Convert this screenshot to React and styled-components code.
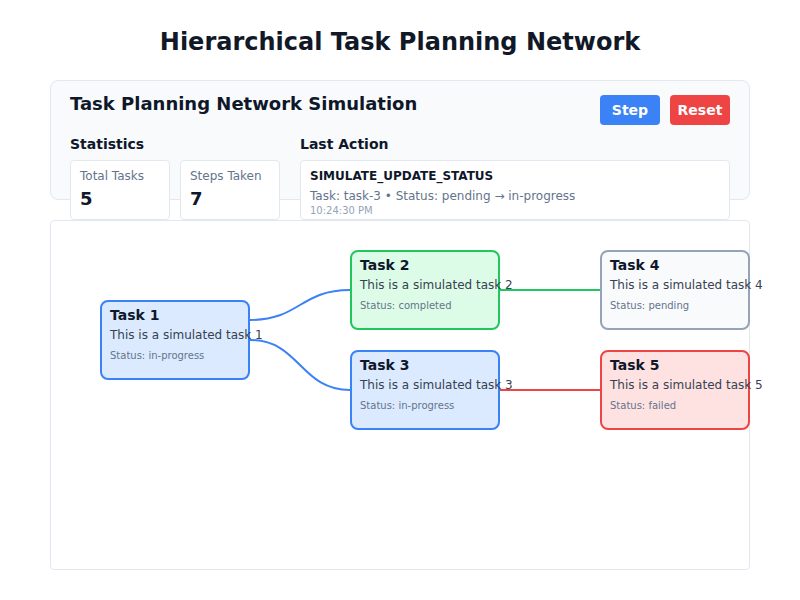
import React from "react";
import styled, { createGlobalStyle } from "styled-components";

const Global = createGlobalStyle`
  html, body { margin: 0; padding: 0; background: #ffffff; }
  body { font-family: "DejaVu Sans", "Liberation Sans", sans-serif; color: #0f172a; }
  * { box-sizing: border-box; }
`;

const Page = styled.div`
  padding: 20px 50px;
  width: 800px;
`;

const Title = styled.h1`
  margin: 8px 0 24px;
  font-size: 24px;
  line-height: 28px;
  font-weight: 700;
  text-align: center;
  color: #111827;
`;

const Panel = styled.section`
  height: 120px;
  padding: 14px 19px;
  background: #f8fafc;
  border: 1px solid #e2e8f0;
  border-radius: 8px;
  margin-bottom: 20px;
`;

const Header = styled.div`
  display: flex;
  justify-content: space-between;
  align-items: flex-start;
`;

const PanelTitle = styled.h2`
  margin: 0;
  font-size: 18px;
  line-height: 18px;
  font-weight: 700;
  color: #0f172a;
`;

const Buttons = styled.div`
  display: flex;
  gap: 10px;
`;

const Button = styled.button`
  width: 60px;
  height: 30px;
  border: none;
  border-radius: 4px;
  padding: 0;
  font-family: inherit;
  font-size: 14px;
  font-weight: 700;
  color: #ffffff;
  background: ${(p) => (p.$variant === "danger" ? "#ef4444" : "#3b82f6")};
  cursor: pointer;
`;

const Sections = styled.div`
  margin-top: 11px;
  display: flex;
  gap: 20px;
`;

const Section = styled.div`
  display: flex;
  flex-direction: column;
  flex: ${(p) => (p.$grow ? 1 : "none")};
`;

const SectionTitle = styled.h3`
  margin: 0 0 7px;
  font-size: 14px;
  line-height: 17px;
  font-weight: 700;
  color: #0f172a;
`;

const StatRow = styled.div`
  display: flex;
  gap: 10px;
`;

const Card = styled.div`
  height: 60px;
  width: ${(p) => (p.$wide ? "auto" : "100px")};
  padding: 8px 9px;
  background: #ffffff;
  border: 1px solid #e2e8f0;
  border-radius: 4px;
`;

const StatLabel = styled.div`
  font-size: 12px;
  line-height: 14px;
  color: #64748b;
`;

const StatValue = styled.div`
  margin-top: 5px;
  font-size: 18px;
  line-height: 21px;
  font-weight: 700;
  color: #0f172a;
`;

const ActionType = styled.div`
  font-size: 12px;
  line-height: 14px;
  font-weight: 700;
  color: #0f172a;
  margin-bottom: 6px;
`;

const ActionDetail = styled.div`
  font-size: 12px;
  line-height: 14px;
  color: #64748b;
  margin-bottom: 2px;
`;

const ActionTime = styled.div`
  font-size: 10px;
  line-height: 12px;
  color: #94a3b8;
`;

const Canvas = styled.div`
  position: relative;
  height: 350px;
  background: #ffffff;
  border: 1px solid #e2e8f0;
  border-radius: 4px;
`;

const Layer = styled.div`
  position: absolute;
  inset: -1px;
`;

const Edges = styled.svg`
  position: absolute;
  left: 0;
  top: 0;
  overflow: visible;
`;

const statusStyles = {
  "in-progress": { bg: "#dbeafe", border: "#3b82f6" },
  completed: { bg: "#dcfce7", border: "#22c55e" },
  pending: { bg: "#f8fafc", border: "#94a3b8" },
  failed: { bg: "#fee2e2", border: "#ef4444" },
};

const Node = styled.div`
  position: absolute;
  width: 150px;
  height: 80px;
  padding: 5px 8px;
  border: 2px solid ${(p) => statusStyles[p.$status].border};
  background: ${(p) => statusStyles[p.$status].bg};
  border-radius: 8px;
  white-space: nowrap;
`;

const NodeTitle = styled.div`
  font-size: 14px;
  line-height: 16px;
  font-weight: 700;
  color: #0f172a;
  margin-bottom: 5px;
`;

const NodeDesc = styled.div`
  font-size: 12px;
  line-height: 14px;
  color: #374151;
  margin-bottom: 8px;
`;

const NodeStatus = styled.div`
  font-size: 10px;
  line-height: 12px;
  color: #64748b;
`;

const tasks = [
  { id: 1, status: "in-progress", x: 50, y: 80 },
  { id: 2, status: "completed", x: 300, y: 30 },
  { id: 3, status: "in-progress", x: 300, y: 130 },
  { id: 4, status: "pending", x: 550, y: 30 },
  { id: 5, status: "failed", x: 550, y: 130 },
];

const edges = [
  { d: "M200 100 C250 100, 250 70, 300 70", color: "#3b82f6" },
  { d: "M200 120 C250 120, 250 170, 300 170", color: "#3b82f6" },
  { d: "M450 70 L550 70", color: "#22c55e" },
  { d: "M450 170 L550 170", color: "#ef4444" },
];

export default function App() {
  return (
    <Page>
      <Global />
      <Title>Hierarchical Task Planning Network</Title>
      <Panel>
        <Header>
          <PanelTitle>Task Planning Network Simulation</PanelTitle>
          <Buttons>
            <Button>Step</Button>
            <Button $variant="danger">Reset</Button>
          </Buttons>
        </Header>
        <Sections>
          <Section>
            <SectionTitle>Statistics</SectionTitle>
            <StatRow>
              <Card>
                <StatLabel>Total Tasks</StatLabel>
                <StatValue>5</StatValue>
              </Card>
              <Card>
                <StatLabel>Steps Taken</StatLabel>
                <StatValue>7</StatValue>
              </Card>
            </StatRow>
          </Section>
          <Section $grow>
            <SectionTitle>Last Action</SectionTitle>
            <Card $wide>
              <ActionType>SIMULATE_UPDATE_STATUS</ActionType>
              <ActionDetail>Task: task-3 • Status: pending → in-progress</ActionDetail>
              <ActionTime>10:24:30 PM</ActionTime>
            </Card>
          </Section>
        </Sections>
      </Panel>
      <Canvas>
        <Layer>
          <Edges width="700" height="350" viewBox="0 0 700 350">
            {edges.map((e, i) => (
              <path key={i} d={e.d} fill="none" stroke={e.color} strokeWidth="2" />
            ))}
          </Edges>
          {tasks.map((t) => (
            <Node key={t.id} $status={t.status} style={{ left: t.x, top: t.y }}>
              <NodeTitle>Task {t.id}</NodeTitle>
              <NodeDesc>This is a simulated task {t.id}</NodeDesc>
              <NodeStatus>Status: {t.status}</NodeStatus>
            </Node>
          ))}
        </Layer>
      </Canvas>
    </Page>
  );
}
